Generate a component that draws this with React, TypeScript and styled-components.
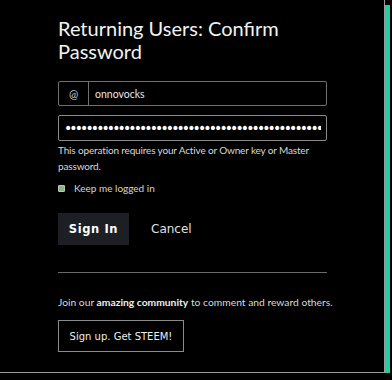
import React from "react";
import styled, { createGlobalStyle } from "styled-components";

const GlobalStyle = createGlobalStyle`
  html, body { margin: 0; padding: 0; background: #000; }
  body { font-family: "Lato", sans-serif; color: #eee; }
  * { box-sizing: border-box; }
`;

const Modal = styled.div`
  width: 385px;
  height: 373px;
  background: #000;
  border-right: 1px solid #9a9a9a;
  border-bottom: 1px solid #9a9a9a;
  box-shadow: 5px 5px 0 0 #1dcfa2;
  padding: 17px 57px 0 58px;
  display: flex;
  flex-direction: column;
`;

const Title = styled.h3`
  margin: 0 0 18px 0;
  font-family: "Lato", sans-serif;
  font-weight: 400;
  font-size: 20px;
  line-height: 23px;
  color: #f2f2f2;
`;

const InputGroup = styled.div`
  display: flex;
  height: 25px;
  border: 1px solid #707070;
  border-radius: 2px;
  margin-bottom: 9px;
`;

const GroupLabel = styled.span`
  width: 30px;
  flex: none;
  display: flex;
  align-items: center;
  justify-content: center;
  border-right: 1px solid #707070;
  font-family: "Lato", sans-serif;
  font-size: 11px;
  color: #cfcfcf;
`;

const TextValue = styled.span`
  display: flex;
  align-items: center;
  padding-left: 6px;
  font-size: 10.5px;
  color: #e6e6e6;
`;

const PasswordInput = styled.input`
  display: block;
  width: 100%;
  height: 26px;
  border: 1px solid #8a8a8a;
  border-radius: 2px;
  background: #000;
  color: #fff;
  padding: 0 5px 0 5px;
  font-family: "DejaVu Sans", sans-serif;
  font-size: 14px;
  letter-spacing: -2.9px;
  outline: none;
`;

const Help = styled.p`
  margin: 1px 0 0 0;
  font-size: 10px;
  letter-spacing: -0.15px;
  line-height: 16px;
  color: #d8d8d8;
`;

const CheckRow = styled.label`
  display: flex;
  align-items: center;
  gap: 9px;
  margin-top: 8px;
  font-size: 10px;
  color: #d6d6d6;
`;

const Check = styled.span`
  width: 7px;
  height: 7px;
  background: #8fb08a;
  border: 1px solid #b7cdb3;
  border-radius: 1px;
  display: block;
`;

const ButtonRow = styled.div`
  display: flex;
  align-items: center;
  gap: 22px;
  margin-top: 19px;
`;

const PrimaryButton = styled.button`
  width: 71px;
  height: 32px;
  border: none;
  background: #1c2024;
  color: #fff;
  font-family: "DejaVu Sans", sans-serif;
  font-weight: 700;
  font-size: 11.5px;
  letter-spacing: 0.6px;
  padding: 0;
  cursor: pointer;
`;

const LinkButton = styled.span`
  font-family: "DejaVu Sans", sans-serif;
  font-size: 12px;
  color: #e0e0e0;
`;

const Rule = styled.hr`
  margin: 27px 0 0 0;
  border: none;
  border-top: 1px solid #6a6a6a;
  width: 269px;
`;

const Join = styled.p`
  margin: 21px 0 0 0;
  font-size: 10.3px;
  line-height: 16px;
  white-space: nowrap;
  color: #d8d8d8;
  b { font-weight: 700; color: #eee; }
`;

const OutlineButton = styled.button`
  align-self: flex-start;
  margin-top: 10px;
  width: 126px;
  height: 32px;
  border: 1px solid #8a8a8a;
  background: #000;
  color: #eee;
  font-family: "DejaVu Sans", sans-serif;
  font-size: 10px;
  padding: 0;
`;

export default function App() {
  return (
    <>
      <GlobalStyle />
      <Modal>
        <Title>
          Returning Users: Confirm
          <br />
          Password
        </Title>
        <InputGroup>
          <GroupLabel>@</GroupLabel>
          <TextValue>onnovocks</TextValue>
        </InputGroup>
        <PasswordInput type="password" readOnly value={"x".repeat(70)} />
        <Help>This operation requires your Active or Owner key or Master password.</Help>
        <CheckRow>
          <Check />
          Keep me logged in
        </CheckRow>
        <ButtonRow>
          <PrimaryButton>Sign In</PrimaryButton>
          <LinkButton>Cancel</LinkButton>
        </ButtonRow>
        <Rule />
        <Join>
          Join our <b>amazing community</b> to comment and reward others.
        </Join>
        <OutlineButton>Sign up. Get STEEM!</OutlineButton>
      </Modal>
    </>
  );
}
